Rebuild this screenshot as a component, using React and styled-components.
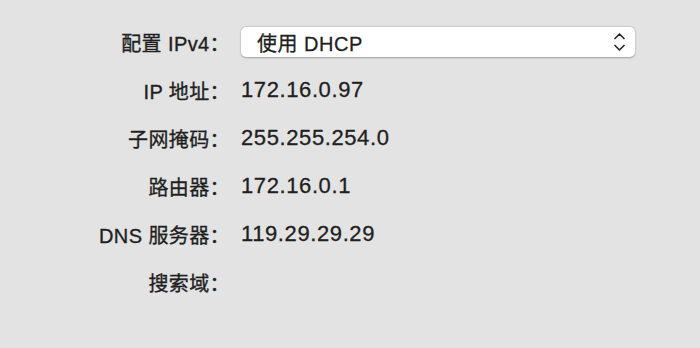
import React from "react";
import styled, { createGlobalStyle } from "styled-components";

const Global = createGlobalStyle`
  html, body { margin: 0; padding: 0; background: #e3e3e3; }
  body { font-family: "Liberation Sans", "Noto Sans CJK SC", sans-serif; color: #232323; }
`;

const Page = styled.div`
  width: 700px;
  height: 348px;
  box-sizing: border-box;
  padding: 27px 65px 0 0;
  background: #e3e3e3;
`;

const Form = styled.div`
  display: grid;
  grid-template-columns: 230px 1fr;
  column-gap: 11px;
  row-gap: 18px;
  grid-auto-rows: 30px;
  align-items: center;
`;

const Label = styled.div`
  text-align: right;
  font-size: 20px;
  letter-spacing: 0.4px;
  white-space: nowrap;
  color: #1f1f1f;
  -webkit-text-stroke: 0.35px #1f1f1f;
`;

const Value = styled.div`
  font-size: 22px;
  letter-spacing: 0.6px;
  white-space: nowrap;
  color: #1f1f1f;
  -webkit-text-stroke: 0.3px #1f1f1f;
`;

const Popup = styled.div`
  height: 30px;
  background: #fff;
  border-radius: 5px;
  box-shadow: 0 0.5px 2px rgba(0, 0, 0, 0.28), 0 0 0 0.5px rgba(0, 0, 0, 0.06);
  display: flex;
  align-items: center;
  justify-content: space-between;
  padding: 0 9px 0 16px;
  font-size: 20px;
  letter-spacing: 0.5px;
  color: #1f1f1f;
  -webkit-text-stroke: 0.3px #1f1f1f;
`;

const Chevrons = () => (
  <svg width="13" height="20" viewBox="0 0 13 20" fill="none" stroke="#2a2a2a" strokeWidth="1.7" strokeLinecap="round" strokeLinejoin="round">
    <path d="M2 6.5 L6.5 2 L11 6.5" />
    <path d="M2 13.5 L6.5 18 L11 13.5" />
  </svg>
);

const rows = [
  ["IP 地址：", "172.16.0.97"],
  ["子网掩码：", "255.255.254.0"],
  ["路由器：", "172.16.0.1"],
  ["DNS 服务器：", "119.29.29.29"],
  ["搜索域：", ""],
];

export default function App() {
  return (
    <>
      <Global />
      <Page>
        <Form>
          <Label>配置 IPv4：</Label>
          <Popup>
            <span>使用 DHCP</span>
            <Chevrons />
          </Popup>
          {rows.map(([l, v]) => (
            <React.Fragment key={l}>
              <Label>{l}</Label>
              <Value>{v}</Value>
            </React.Fragment>
          ))}
        </Form>
      </Page>
    </>
  );
}
